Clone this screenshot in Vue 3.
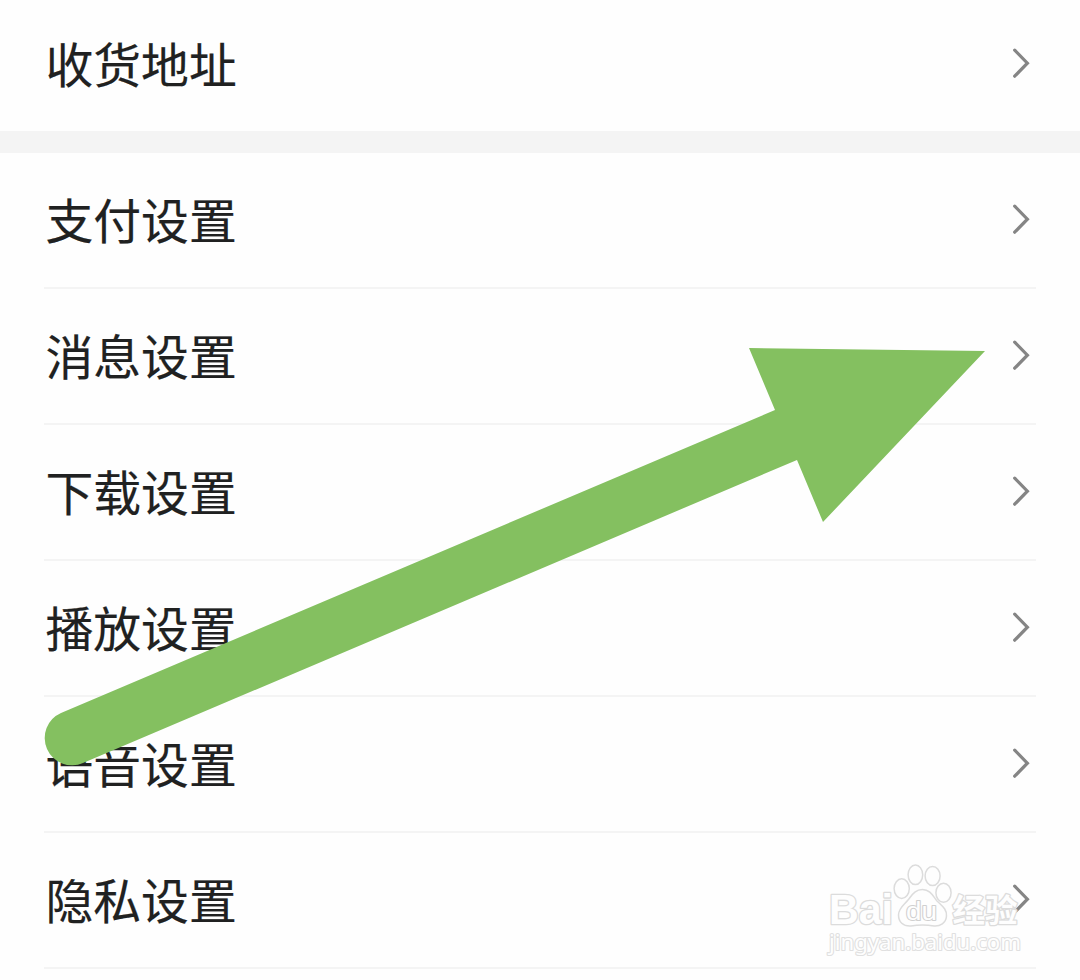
<script setup>
const groups = [
  ['收货地址'],
  ['支付设置', '消息设置', '下载设置', '播放设置', '语音设置', '隐私设置'],
]
</script>

<template>
  <main class="screen">
    <section v-for="(items, g) in groups" :key="g" class="group">
      <div v-for="label in items" :key="label" class="row">
        <span class="label">{{ label }}</span>
        <svg class="chevron" width="20" height="34" viewBox="0 0 20 34">
          <path d="M4.7 4.2 L17.4 17.2 L4.7 30.2" />
        </svg>
      </div>
    </section>

    <svg class="overlay" width="1080" height="980" viewBox="0 0 1080 980">
      <path
        class="arrow"
        d="M61 713 L775 410 L749 348 L985 351 L823 522 L797 460 L83 763 A27.2 27.2 0 0 1 61 713 Z"
      />
      <g class="watermark">
        <text class="brand" x="829" y="923.5" font-size="42" textLength="64" lengthAdjust="spacingAndGlyphs">Bai</text>
        <ellipse cx="901.7" cy="888.6" rx="7.6" ry="9.8" />
        <ellipse cx="915.4" cy="874.8" rx="7.3" ry="9.8" />
        <ellipse cx="932.6" cy="876" rx="7.5" ry="9.5" />
        <ellipse cx="943.5" cy="892.8" rx="7.6" ry="9.5" />
        <path
          d="M922.5 889.5 C930 889.5 933 896 937 901 C942 906 947 909 946.5 916 C946 923 940 926.5 934 926 C926 924.5 919 924.5 911 926 C903 926.5 898.5 922 898.5 915 C898.5 908 904 905 908 900 C912 895 915 889.5 922.5 889.5 Z"
        />
        <text class="du" x="906" y="920" font-size="25" textLength="31" lengthAdjust="spacingAndGlyphs">du</text>
        <text class="cjk" x="952.5" y="921.5" font-size="32" textLength="65" lengthAdjust="spacingAndGlyphs">经验</text>
        <text class="site" x="829" y="950" font-size="22" textLength="192" lengthAdjust="spacingAndGlyphs">jingyan.baidu.com</text>
      </g>
    </svg>
  </main>
</template>

<style>
body {
  margin: 0;
  background: #fefefe;
}
</style>

<style scoped>
.screen {
  position: relative;
  width: 1080px;
  height: 980px;
  overflow: hidden;
  background: #fefefe;
  font-family: "Noto Sans CJK SC", sans-serif;
}
.group + .group {
  border-top: 22px solid #f4f4f4;
}
.row {
  box-sizing: border-box;
  height: 136px;
  margin: 0 44px;
  padding: 0 6px 0 1.5px;
  display: flex;
  align-items: center;
  justify-content: space-between;
  border-bottom: 2px solid #f4f4f4;
}
.group:first-child .row {
  height: 131px;
  padding-bottom: 3px;
  border-bottom: 0;
}
.label {
  margin-bottom: 2px;
  font-size: 47.8px;
  line-height: 70px;
  color: #202121;
  -webkit-text-stroke: 0.2px #202121;
}
.chevron {
  display: block;
  margin-bottom: 2px;
}
.chevron path {
  fill: none;
  stroke: #858585;
  stroke-width: 3.2;
  stroke-linecap: round;
}
.overlay {
  position: absolute;
  inset: 0;
  pointer-events: none;
}
.arrow {
  fill: #84c060;
}
.watermark {
  fill: #fefefe;
  stroke: #dcdcdc;
  stroke-width: 1.5;
  stroke-linejoin: round;
}
.watermark text {
  paint-order: stroke;
  stroke-width: 2.6;
}
.brand,
.du {
  font-family: "Liberation Sans", sans-serif;
  font-weight: 700;
}
.watermark .du {
  stroke-width: 2;
  stroke: #d0d0d0;
  font-weight: 400;
}
.cjk {
  font-family: "Noto Sans CJK SC", sans-serif;
  font-weight: 700;
}
.site {
  font-family: "Noto Sans", sans-serif;
  font-weight: 400;
}
.watermark .site {
  stroke-width: 2.2;
  stroke: #e0e0e0;
}
</style>
